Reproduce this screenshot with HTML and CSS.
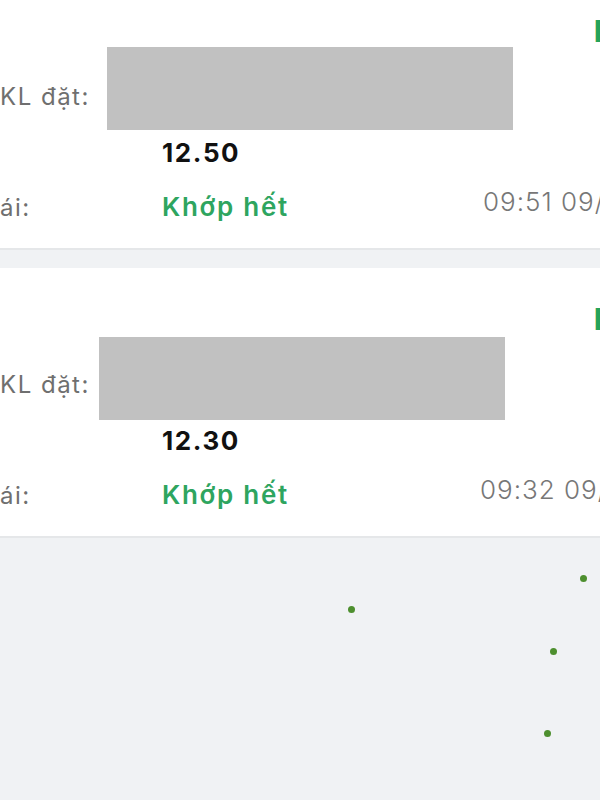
FILE: index.html
```html
<!DOCTYPE html>
<html lang="vi">
<head>
    <meta charset="UTF-8">
    <meta name="viewport" content="width=device-width, initial-scale=1.0">
    <title>Sổ lệnh</title>
    <link rel="stylesheet" href="styles.css">
</head>
<body>
    <div class="order-list">
        <div class="order-card">
            <div class="order-head"><span class="side">Mua</span></div>
            <div class="order-row">
                <span class="label">KL đặt:</span>
            </div>
            <div class="order-row price-row">
                <span class="price">12.50</span>
            </div>
            <div class="order-row status-row">
                <span class="label label-status">ái:</span>
                <span class="status">Khớp hết</span>
                <span class="time">09:51 09/05/2024</span>
            </div>
            <div class="mask mask-1"></div>
        </div>

        <div class="order-card">
            <div class="order-head"><span class="side">Mua</span></div>
            <div class="order-row">
                <span class="label">KL đặt:</span>
            </div>
            <div class="order-row price-row">
                <span class="price">12.30</span>
            </div>
            <div class="order-row status-row">
                <span class="label label-status">ái:</span>
                <span class="status status-2">Khớp hết</span>
                <span class="time">09:32 09/05/2024</span>
            </div>
            <div class="mask mask-2"></div>
        </div>

        <div class="empty-area">
            <span class="dot" style="left: 348px; top: 66px"></span>
            <span class="dot" style="left: 580px; top: 35px"></span>
            <span class="dot" style="left: 550px; top: 108px"></span>
            <span class="dot" style="left: 544px; top: 190px"></span>
        </div>
    </div>
</body>
</html>
```

FILE: styles.css
```css
/* lista de órdenes */
body {
    font-family: Inter, "Noto Sans", sans-serif;
    margin: 0;
    padding: 0;
    background-color: #f0f2f4;
    width: 600px;
    height: 800px;
    overflow: hidden;
}
.order-list {
    margin-top: -20px;
}
.order-card {
    position: relative;
    background-color: #fff;
    border-bottom: 2px solid #e5e7e9;
    margin-bottom: 18px;
    padding-top: 34px;
    height: 234px;
    overflow: hidden;
}
.order-head {
    padding-left: 594px;
    line-height: 34px;
    height: 34px;
}
.side {
    font-size: 30px;
    font-weight: 800;
    color: #26a35a;
}
.order-row {
    display: flex;
    white-space: nowrap;
}
.label {
    font-size: 24px;
    line-height: 40px;
    letter-spacing: 1.5px;
    color: #6f6f6f;
    margin-top: 29px;
}
.price-row {
    padding-left: 162px;
    margin-top: 20px;
}
.price {
    font-size: 26px;
    line-height: 32px;
    font-weight: 700;
    color: #111;
    letter-spacing: 1.6px;
}
.status-row {
    align-items: baseline;
    margin-top: 22px;
}
.label-status {
    width: 162px;
    flex: 0 0 162px;
    margin-top: 0;
    line-height: 32px;
}
.status {
    width: 321px;
    flex: 0 0 321px;
    font-size: 26px;
    line-height: 32px;
    font-weight: 600;
    letter-spacing: 1.7px;
    color: #2ea55f;
}
.status-2 {
    width: 318px;
    flex: 0 0 318px;
}
.time {
    align-self: flex-start;
    font-size: 26px;
    line-height: 22px;
    font-weight: 300;
    letter-spacing: 1px;
    color: #777;
}
.mask {
    position: absolute;
    background-color: #c1c1c1;
    height: 83px;
    width: 406px;
}
.mask-1 {
    left: 107px;
    top: 67px;
}
.mask-2 {
    left: 99px;
    top: 69px;
}
.empty-area {
    position: relative;
    height: 300px;
    margin-top: -16px;
}
.dot {
    position: absolute;
    width: 7px;
    height: 7px;
    border-radius: 50%;
    background-color: #4d8f2e;
}
```
